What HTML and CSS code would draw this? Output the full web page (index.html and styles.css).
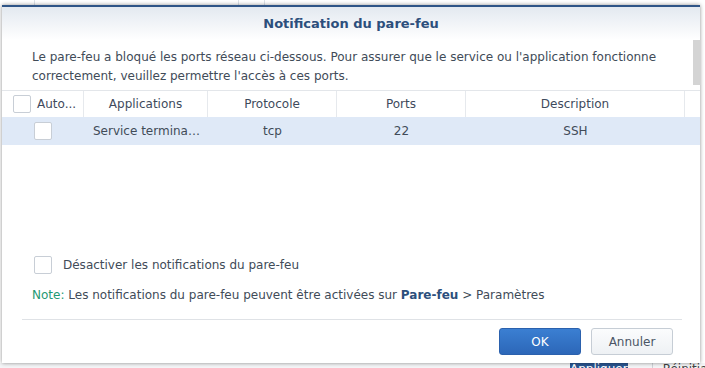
FILE: index.html
```html
<!DOCTYPE html>
<html lang="fr">
<head>
    <meta charset="UTF-8">
    <title>Notification du pare-feu</title>
    <link rel="stylesheet" href="styles.css">
</head>
<body>
    <div class="page">
        <div class="page-row">
            <div class="page-cell first"></div>
            <div class="page-cell name">Port.</div>
            <div class="page-cell">22</div>
        </div>
        <div class="page-toolbar">
            <span class="page-btn">Appliquer</span>
            <span class="page-link">Réinitialiser</span>
        </div>
    </div>

    <div class="dialog">
        <div class="dialog-header">Notification du pare-feu</div>

        <div class="dialog-body">
            <p class="intro">Le pare-feu a bloqué les ports réseau ci-dessous. Pour assurer que le service ou l'application fonctionne correctement, veuillez permettre l'accès à ces ports.</p>

            <div class="grid">
                <div class="grid-head">
                    <div class="col col-check"><span class="checkbox"></span>Auto...</div>
                    <div class="col">Applications</div>
                    <div class="col">Protocole</div>
                    <div class="col">Ports</div>
                    <div class="col">Description</div>
                    <div class="col last"></div>
                </div>
                <div class="grid-row">
                    <div class="cell center"><span class="checkbox"></span></div>
                    <div class="cell left">Service terminal SSH</div>
                    <div class="cell center">tcp</div>
                    <div class="cell center">22</div>
                    <div class="cell center">SSH</div>
                    <div class="cell"></div>
                </div>
            </div>

            <div class="scroll-thumb"></div>
        </div>

        <div class="options">
            <label class="option"><span class="checkbox"></span>Désactiver les notifications du pare-feu</label>
            <p class="note"><span class="note-label">Note:</span> Les notifications du pare-feu peuvent être activées sur <strong>Pare-feu</strong> &gt; Paramètres</p>
        </div>

        <div class="dialog-footer">
            <button class="btn btn-primary">OK</button>
            <button class="btn">Annuler</button>
        </div>
    </div>
</body>
</html>
```
FILE: styles.css
```css
body {
    margin: 0;
    width: 705px;
    height: 368px;
    overflow: hidden;
    position: relative;
    font-family: 'DejaVu Sans', Verdana, sans-serif;
    font-size: 12px;
    color: #414b58;
    background: #fff;
}
.page {
    height: 368px;
    display: flex;
    flex-direction: column;
    justify-content: space-between;
}
.page-row {
    display: flex;
    height: 22px;
    margin-top: -16px;
    line-height: 22px;
    color: #555;
    font-size: 13px;
}
.page-cell {
    padding-left: 8px;
    border-right: 1px solid #dde2e8;
}
.page-cell.first {
    width: 26px;
}
.page-cell.name {
    width: 204px;
    padding-left: 50px;
    box-sizing: border-box;
}
.page-toolbar {
    display: flex;
    align-items: flex-start;
    height: 5px;
    overflow: hidden;
    padding-left: 570px;
    background: #f4f5f7;
}
.page-btn {
    display: block;
    width: 86px;
    height: 26px;
    background: #2a5591;
    color: #fff;
    text-align: center;
    line-height: 12px;
}
.page-link {
    margin-left: 24px;
    padding-left: 10px;
    border-left: 1px solid #d0d4d9;
    line-height: 12px;
    color: #444;
}

/* dialog */
.dialog {
    position: absolute;
    left: 2px;
    top: 5px;
    width: 698px;
    height: 358px;
    background: #fff;
    box-shadow: 0 0 4px rgba(0,0,0,0.45);
    display: flex;
    flex-direction: column;
}
.dialog-header {
    height: 33px;
    border-top: 2px solid #2f5587;
    background: linear-gradient(#e3e9f0, #fff);
    text-align: center;
    line-height: 33px;
    font-weight: bold;
    font-size: 13px;
    color: #2c4f7c;
}
.dialog-body {
    position: relative;
}
.intro {
    margin: 0;
    padding: 8px 30px 0;
    line-height: 19px;
    color: #414b58;
}
.grid {
    margin-top: 4px;
    border-top: 1px solid #e3e6ea;
}
.grid-head, .grid-row {
    display: grid;
    grid-template-columns: 82px 124px 129px 129px 219px 1fr;
}
.grid-head {
    height: 26px;
}
.col {
    border-right: 1px solid #e6e9ed;
    text-align: center;
    line-height: 26px;
    color: #3e4a5c;
}
.col.last {
    border-right: none;
}
.col.col-check {
    display: flex;
    align-items: center;
    gap: 6px;
    padding-left: 11px;
    text-align: left;
}
.grid-row {
    height: 28px;
    background: #dfe9f7;
}
.cell {
    display: flex;
    align-items: center;
    overflow: hidden;
    white-space: nowrap;
}
.cell.center {
    justify-content: center;
}
.cell.left {
    display: block;
    line-height: 28px;
    padding: 0 6px 0 9px;
    text-overflow: ellipsis;
}
.checkbox {
    display: inline-block;
    width: 16px;
    height: 16px;
    border: 1px solid #c8ced6;
    border-radius: 2px;
    background: #fff;
    flex-shrink: 0;
}
.scroll-thumb {
    position: absolute;
    right: -1px;
    top: 0;
    width: 8px;
    height: 45px;
    background: #d4d4d4;
}
.options {
    margin-top: auto;
    padding: 0 32px;
}
.option {
    display: flex;
    align-items: center;
    gap: 11px;
}
.note {
    margin: 12px 0 14px -2px;
    line-height: 19px;
}
.note-label {
    color: #1f9a73;
}
.note strong {
    color: #2c4f7c;
}
.dialog-footer {
    display: flex;
    justify-content: flex-end;
    gap: 10px;
    margin: 0 18px 0 20px;
    padding: 8px 9px 8px;
    border-top: 1px solid #dfe2e6;
}
.btn {
    width: 82px;
    height: 27px;
    border: 1px solid #c6cdd5;
    border-radius: 3px;
    background: linear-gradient(#fbfcfd, #eef1f4);
    font-family: inherit;
    font-size: 12px;
    color: #4a5565;
}
.btn-primary {
    border-color: #2b61ad;
    background: linear-gradient(#3b7fd2, #2c67b8);
    color: #fff;
}
```
